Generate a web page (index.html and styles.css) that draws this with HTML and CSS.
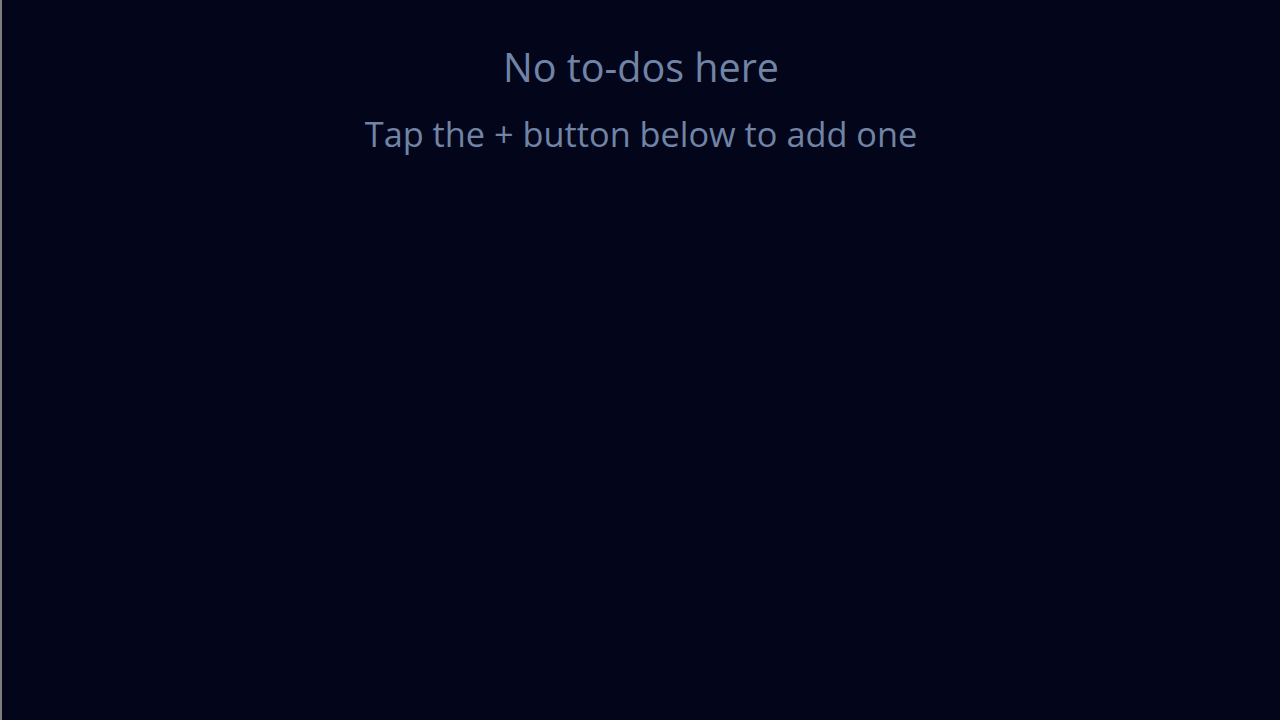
FILE: index.html
```html
<!DOCTYPE html>
<html lang="en">
<head>
<meta charset="utf-8">
<title>To-dos</title>
<link rel="stylesheet" href="styles.css">
</head>
<body>
<main class="app">
  <section class="empty">
    <h1 class="empty-title">No to-dos here</h1>
    <p class="empty-sub">Tap the + button below to add one</p>
  </section>
</main>
</body>
</html>
```
FILE: styles.css
```css
html, body {
  margin: 0;
  padding: 0;
  height: 100%;
}
body {
  background: #03061a;
  font-family: "Open Sans", Lato, sans-serif;
}
.app {
  height: 100%;
  box-sizing: border-box;
  border-left: 2px solid #7d7d7d;
  display: flex;
  flex-direction: column;
}
.empty {
  display: flex;
  flex-direction: column;
  align-items: center;
  padding-top: 43px;
  gap: 21px;
  color: #7184a6;
}
.empty-title {
  margin: 0;
  font-size: 39.5px;
  font-weight: 400;
  line-height: 48px;
}
.empty-sub {
  margin: 0;
  font-size: 34.3px;
  font-weight: 400;
  line-height: 44px;
}
```
